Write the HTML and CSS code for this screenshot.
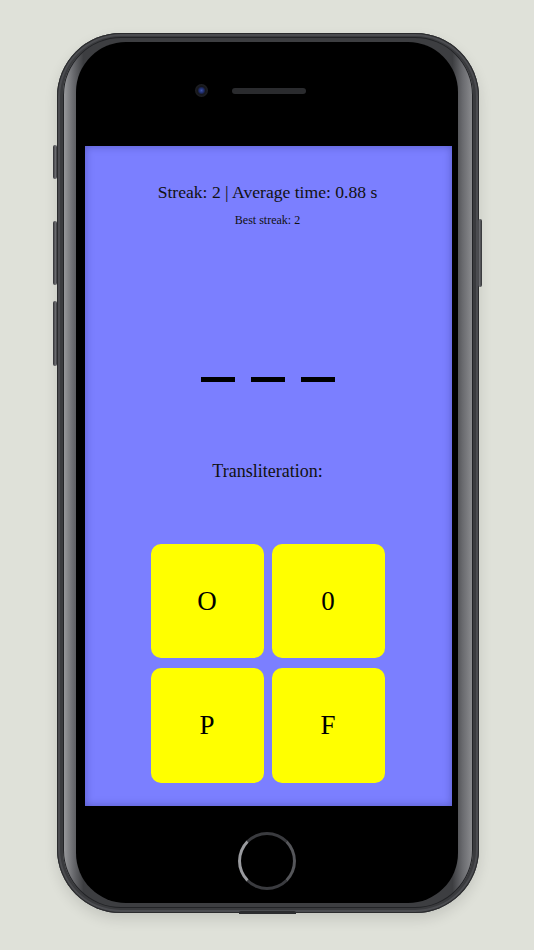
FILE: index.html
```html
<!DOCTYPE html>
<html lang="en">
<head>
<meta charset="utf-8">
<title>Transliteration quiz</title>
<link rel="stylesheet" href="styles.css">
</head>
<body>
<div class="page">
  <div class="phone">
    <span class="side-btn mute"></span>
    <span class="side-btn vol-up"></span>
    <span class="side-btn vol-down"></span>
    <span class="side-btn power"></span>
    <span class="bottom-bump"></span>
    <div class="rim">
      <div class="front">
        <div class="top-bar">
          <span class="camera"></span>
          <span class="speaker"></span>
        </div>
        <main class="screen">
          <p class="stats">Streak: 2 | Average time: 0.88 s</p>
          <p class="best">Best streak: 2</p>
          <div class="dashes"><span></span><span></span><span></span></div>
          <p class="label">Transliteration:</p>
          <div class="choices">
            <button class="choice">O</button>
            <button class="choice">0</button>
            <button class="choice">P</button>
            <button class="choice">F</button>
          </div>
        </main>
        <div class="bottom-bar">
          <span class="home"></span>
        </div>
      </div>
    </div>
  </div>
</div>
</body>
</html>
```

FILE: styles.css
```css
html, body {
  margin: 0;
  padding: 0;
}
body {
  background: #dfe1d9;
  font-family: "Liberation Serif", "DejaVu Serif", serif;
  color: #111;
}
.page {
  padding: 33px 0 0 57px;
  height: 950px;
  box-sizing: border-box;
}
.phone {
  position: relative;
  width: 422px;
  height: 880px;
  box-sizing: border-box;
  padding: 4px 6px 5px 6px;
  border-radius: 64px;
  background: #3a3b3e;
  box-shadow: inset 0 0 0 1px #2a2b2d, inset 0 0 0 3px #4b4c50, 0 6px 14px rgba(0,0,0,0.12);
}
.side-btn {
  position: absolute;
  width: 4px;
  border-radius: 2px;
  background: linear-gradient(90deg, #2e2f32, #6b6c70 60%, #3a3b3e);
}
.mute { left: -4px; top: 112px; height: 34px; }
.vol-up { left: -4px; top: 188px; height: 64px; }
.vol-down { left: -4px; top: 268px; height: 65px; }
.power { right: -3px; top: 186px; height: 68px; background: linear-gradient(90deg, #3a3b3e, #6b6c70 40%, #2e2f32); }
.bottom-bump {
  position: absolute;
  left: 182px;
  bottom: -1px;
  width: 57px;
  height: 3px;
  border-radius: 2px 2px 0 0;
  background: #2b2c2e;
}
.rim {
  height: 100%;
  box-sizing: border-box;
  padding: 5px 15px 5px 13px;
  border-radius: 58px;
  background: linear-gradient(90deg, #9c9da0 0, #6a6b6f 2.5%, #3d3e41 5%, #3d3e41 95%, #6a6b6f 97.5%, #8d8e91 100%);
  box-shadow: inset 0 0 0 1px #222326;
}
.front {
  height: 100%;
  display: flex;
  flex-direction: column;
  background: #000;
  border-radius: 50px;
  overflow: hidden;
}
.top-bar {
  height: 104px;
  flex: none;
  box-sizing: border-box;
  padding: 42px 0 0 119px;
  display: flex;
  align-items: flex-start;
}
.top-bar > * { flex: none; }
.camera {
  width: 13px;
  height: 13px;
  border-radius: 50%;
  background: radial-gradient(circle at 50% 50%, #3c52a8 0, #1d2a66 2.5px, #15161b 4px, #1f2024 6.5px);
}
.speaker {
  margin: 3.5px 0 0 24px;
  width: 74px;
  height: 6px;
  border-radius: 3px;
  background: #2a2b2e;
}
.screen {
  height: 660px;
  flex: none;
  margin: 0 6px 0 9px;
  padding-right: 2px;
  background: #7b7fff;
  box-shadow: inset 0 0 8px rgba(20, 20, 90, 0.35);
  display: flex;
  flex-direction: column;
  align-items: center;
  text-align: center;
}
.stats {
  margin: 35px 0 0;
  font-size: 17.6px;
  line-height: 22px;
}
.best {
  margin: 9px 0 0;
  font-size: 12px;
  line-height: 16px;
}
.dashes {
  margin-top: 149px;
  display: flex;
  gap: 16px;
}
.dashes span {
  width: 34px;
  height: 5px;
  background: #000;
}
.label {
  margin: 78px 0 0;
  font-size: 18px;
  line-height: 22px;
}
.choices {
  margin-top: 62px;
  display: grid;
  grid-template-columns: 113px 113px;
  grid-template-rows: 114px 115px;
  column-gap: 8px;
  row-gap: 10px;
}
.choice {
  border: none;
  border-radius: 10px;
  background: #ffff00;
  font-family: "Liberation Serif", "DejaVu Serif", serif;
  font-size: 27px;
  color: #000;
  padding: 0;
}
.bottom-bar {
  flex: 1;
  display: flex;
  justify-content: center;
  padding-top: 26px;
}
.home {
  width: 58px;
  height: 58px;
  box-sizing: border-box;
  border-radius: 50%;
  border: 3px solid #3a3b3f;
  border-left-color: #9a9b9f;
  border-right-color: #55565a;
  background: #000;
}
```
